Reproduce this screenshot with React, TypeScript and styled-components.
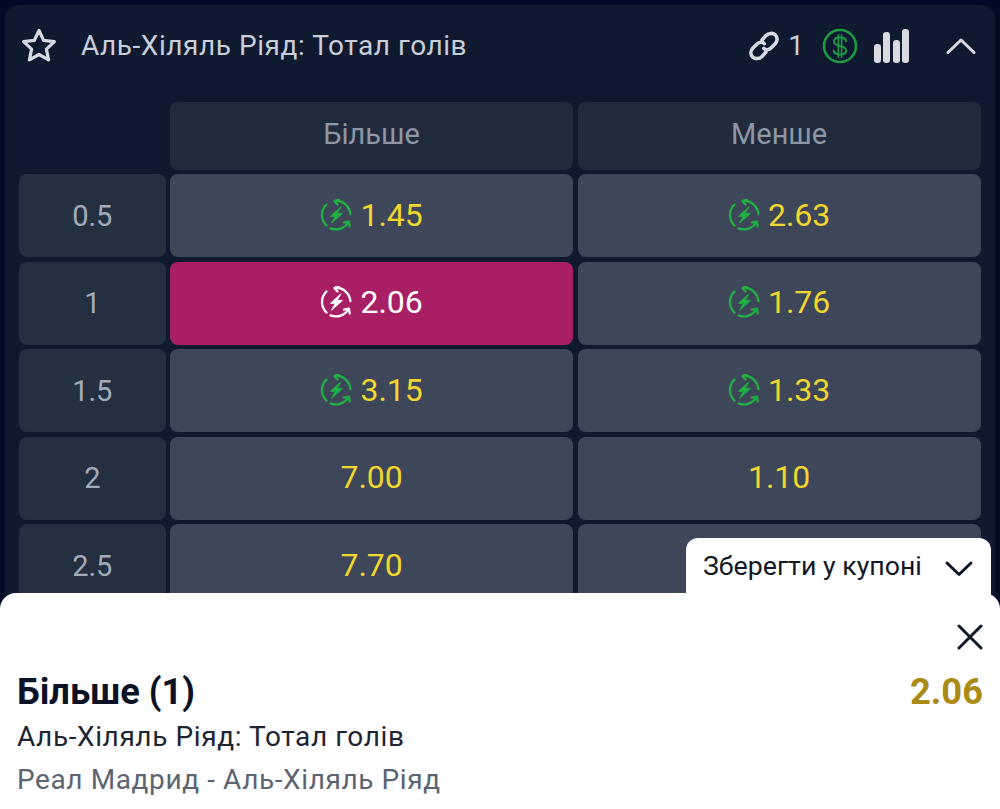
import React from "react";
import styled, { createGlobalStyle } from "styled-components";

const GlobalStyle = createGlobalStyle`
  html, body {
    margin: 0;
    padding: 0;
    height: 809px;
    overflow: hidden;
    background: #020b25;
    font-family: Roboto, "Liberation Sans", sans-serif;
  }
`;

type Odd = { value: string; boost?: boolean; active?: boolean };

const rows: { label: string; over: Odd; under: Odd }[] = [
  { label: "0.5", over: { value: "1.45", boost: true }, under: { value: "2.63", boost: true } },
  { label: "1", over: { value: "2.06", boost: true, active: true }, under: { value: "1.76", boost: true } },
  { label: "1.5", over: { value: "3.15", boost: true }, under: { value: "1.33", boost: true } },
  { label: "2", over: { value: "7.00" }, under: { value: "1.10" } },
  // the right value of this row sits under the save tab
  { label: "2.5", over: { value: "7.70" }, under: { value: "" } },
];

const BoostIcon = ({ color }: { color: string }) => (
  <BoostSvg viewBox="0 0 32 32" fill="none" stroke={color} strokeWidth="2.3" strokeLinecap="round" strokeLinejoin="round">
    <path d="M6.5 5.5 A14.5 14.5 0 0 0 6.5 26.5" />
    <path d="M15 1.8 A14.5 14.5 0 0 1 30.4 15" />
    <path d="M10.5 29.4 A14.5 14.5 0 0 0 28.5 23" />
    <path d="M18.5 0.6 L14.5 2 L17.5 5.4" />
    <path d="M24 23.6 L28.9 22.6 L29.7 27.4" />
    <path d="M20.8 8 L10.5 17.3 H15.4 L11.6 24.2 L22.4 14.4 H17.2 Z" fill={color} strokeWidth="1" />
  </BoostSvg>
);

const OddCell = ({ odd }: { odd: Odd }) => (
  <Cell $active={odd.active}>
    {odd.boost && <BoostIcon color={odd.active ? "#ffffff" : "#1fb141"} />}
    {odd.value}
  </Cell>
);

export default function App() {
  return (
    <>
      <GlobalStyle />
      <Card>
        <Header>
          <StarSvg viewBox="0 0 36 36" fill="none" stroke="#d5d9e2" strokeWidth="3.2" strokeLinejoin="round">
            <path d="M18 2.5 L22.6 12.3 L33.4 13.7 L25.4 21.1 L27.6 31.9 L18 26.5 L8.4 31.9 L10.6 21.1 L2.6 13.7 L13.4 12.3 Z" />
          </StarSvg>
          <Title>Аль-Хіляль Ріяд: Тотал голів</Title>
          <Tools>
            <LinkGroup>
              <LinkSvg viewBox="0 0 32 32" fill="none" stroke="#d5d9e2" strokeWidth="3.6" strokeLinecap="round">
                <path d="M14 10 L18 5.6 C20.6 3 25 2.6 27.4 5 C30 7.6 29.4 11.6 26.8 14.2 L23 18 C21 20 17.6 20.4 15.8 18.4" />
                <path d="M18 22 L14 26.4 C11.4 29 7 29.4 4.6 27 C2 24.4 2.6 20.4 5.2 17.8 L9 14 C11 12 14.4 11.6 16.2 13.6" />
              </LinkSvg>
              <LinkCount>1</LinkCount>
            </LinkGroup>
            <DollarBadge>
              <svg width="36" height="36" viewBox="0 0 36 36" fill="none" stroke="#1f9a43" strokeWidth="2" strokeLinecap="round">
                <circle cx="18" cy="18" r="16" strokeWidth="2.6" />
                <path d="M24 13.2 C24 10.8 21.4 9.6 18 9.6 C14.4 9.6 12 11.2 12 13.8 C12 19.4 24.2 16.4 24.2 22.4 C24.2 25 21.6 26.4 18 26.4 C14.4 26.4 11.8 25 11.8 22.6" />
                <path d="M16.4 6.8 V29.2 M19.6 6.8 V29.2" strokeWidth="1.6" />
              </svg>
            </DollarBadge>
            <svg width="35" height="34" viewBox="0 0 35 34" fill="#d9dbe0">
              <rect x="0" y="15" width="7" height="19" rx="3.2" />
              <rect x="9" y="3" width="7" height="31" rx="3.2" />
              <rect x="19" y="11" width="7" height="23" rx="3.2" />
              <rect x="28" y="0" width="7" height="34" rx="3.2" />
            </svg>
            <Chevron viewBox="0 0 30 18" fill="none" stroke="#d9dce3" strokeWidth="3" strokeLinecap="round" strokeLinejoin="round">
              <path d="M2 15.5 L15 3 L28 15.5" />
            </Chevron>
          </Tools>
        </Header>
        <Grid>
          <Spacer />
          <HeadCell>Більше</HeadCell>
          <HeadCell>Менше</HeadCell>
          {rows.map((row) => (
            <React.Fragment key={row.label}>
              <LabelCell>{row.label}</LabelCell>
              <OddCell odd={row.over} />
              <OddCell odd={row.under} />
            </React.Fragment>
          ))}
        </Grid>
      </Card>
      <SaveTab>
        <span>Зберегти у купоні</span>
        <svg width="30" height="18" viewBox="0 0 30 18" fill="none" stroke="#0d1526" strokeWidth="3" strokeLinecap="round" strokeLinejoin="round">
          <path d="M3 4 L15 15.5 L27 4" />
        </svg>
      </SaveTab>
      <Sheet>
        <CloseRow>
          <svg width="26" height="26" viewBox="0 0 26 26" fill="none" stroke="#101828" strokeWidth="3" strokeLinecap="round">
            <path d="M2 2 L24 24 M24 2 L2 24" />
          </svg>
        </CloseRow>
        <PickRow>
          <PickName>Більше (1)</PickName>
          <PickOdd>2.06</PickOdd>
        </PickRow>
        <Market>Аль-Хіляль Ріяд: Тотал голів</Market>
        <Match>Реал Мадрид - Аль-Хіляль Ріяд</Match>
      </Sheet>
    </>
  );
}

const Card = styled.div`
  margin: 5px 5px 0;
  height: 804px;
  padding: 0 14px;
  box-sizing: border-box;
  background: #0f1a30;
  border-radius: 14px 14px 0 0;
`;

const Header = styled.div`
  display: flex;
  align-items: center;
  height: 97px;
  padding: 0 0 16px 2px;
  box-sizing: border-box;
`;

const StarSvg = styled.svg`
  width: 36px;
  height: 36px;
  flex: none;
`;

const Title = styled.div`
  margin-left: 24px;
  font-size: 28px;
  color: #c9ced9;
  letter-spacing: 0.55px;
`;

const Tools = styled.div`
  margin-left: auto;
  display: flex;
  align-items: center;
  padding-right: 5px;
`;

const LinkGroup = styled.div`
  display: flex;
  align-items: center;
  gap: 8px;
`;

const LinkSvg = styled.svg`
  width: 32px;
  height: 32px;
`;

const LinkCount = styled.span`
  font-size: 28px;
  color: #c9ced9;
`;

const DollarBadge = styled.div`
  display: flex;
  margin: 0 16px 0 18px;
`;

const Chevron = styled.svg`
  width: 30px;
  height: 18px;
  margin-left: 37px;
`;

const Grid = styled.div`
  display: grid;
  grid-template-columns: 146.6px 403px 403px;
  grid-template-rows: 67.5px repeat(5, 83px);
  gap: 4.5px;
`;

const Spacer = styled.div``;

const BaseCell = styled.div`
  display: flex;
  align-items: center;
  justify-content: center;
  border-radius: 8px;
`;

const HeadCell = styled(BaseCell)`
  background: #212b3e;
  color: #8f97a6;
  font-size: 29px;
  padding-bottom: 3px;
  box-sizing: border-box;
`;

const LabelCell = styled(BaseCell)`
  background: #252f42;
  color: #a4abb8;
  font-size: 29px;
`;

const Cell = styled(BaseCell)<{ $active?: boolean }>`
  gap: 8px;
  box-sizing: border-box;
  padding-bottom: 2px;
  background: ${(p) => (p.$active ? "#a91f66" : "#3e4659")};
  color: ${(p) => (p.$active ? "#ffffff" : "#f0d62e")};
  font-size: 32px;
`;

const BoostSvg = styled.svg`
  width: 32px;
  height: 32px;
  flex: none;
`;

const SaveTab = styled.div`
  position: absolute;
  left: 686px;
  top: 538px;
  width: 305px;
  height: 60px;
  box-sizing: border-box;
  padding: 0 17px;
  display: flex;
  align-items: flex-start;
  justify-content: space-between;
  background: #ffffff;
  border-radius: 12px 12px 0 0;
  color: #111827;
  font-size: 26.7px;

  span {
    margin-top: 12px;
  }

  svg {
    margin-top: 21px;
  }
`;

const Sheet = styled.div`
  position: absolute;
  left: 0;
  right: 0;
  top: 593px;
  height: 216px;
  box-sizing: border-box;
  padding: 0 17px;
  background: #ffffff;
  border-radius: 16px 16px 0 0;
`;

const CloseRow = styled.div`
  display: flex;
  justify-content: flex-end;
  height: 71px;
  padding: 31px 0 0;
  box-sizing: border-box;
`;

const PickRow = styled.div`
  display: flex;
  justify-content: space-between;
  align-items: center;
  height: 54px;
`;

const PickName = styled.div`
  font-size: 36.3px;
  font-weight: 700;
  color: #0b1226;
`;

const PickOdd = styled.div`
  font-size: 36.3px;
  font-weight: 700;
  color: #ab8a16;
`;

const Market = styled.div`
  margin-top: -2px;
  font-size: 28px;
  line-height: 42px;
  letter-spacing: 0.6px;
  color: #1d2433;
`;

const Match = styled.div`
  font-size: 28px;
  line-height: 44px;
  letter-spacing: 0.6px;
  color: #5c6472;
`;
